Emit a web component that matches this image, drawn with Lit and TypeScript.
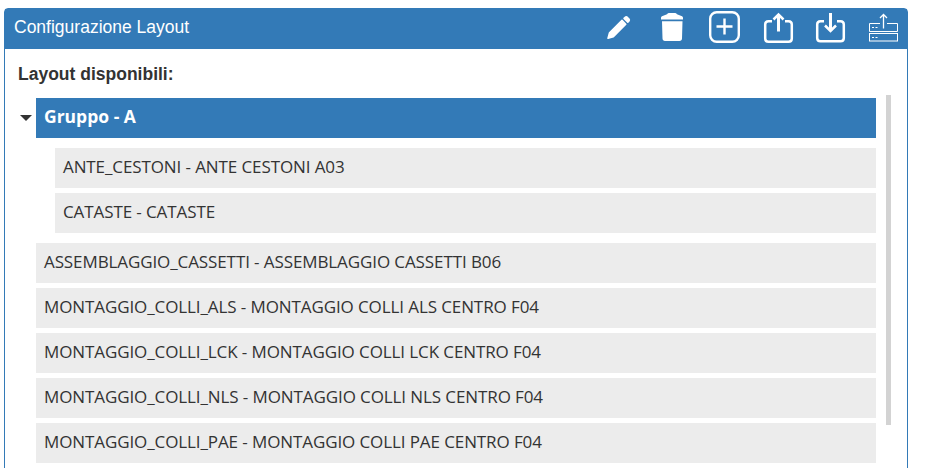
import { LitElement, html, css, svg } from 'lit';
import { customElement } from 'lit/decorators.js';

const groupItems = ['ANTE_CESTONI - ANTE CESTONI A03', 'CATASTE - CATASTE'];

const layouts = [
  'ASSEMBLAGGIO_CASSETTI - ASSEMBLAGGIO CASSETTI B06',
  'MONTAGGIO_COLLI_ALS - MONTAGGIO COLLI ALS CENTRO F04',
  'MONTAGGIO_COLLI_LCK - MONTAGGIO COLLI LCK CENTRO F04',
  'MONTAGGIO_COLLI_NLS - MONTAGGIO COLLI NLS CENTRO F04',
  'MONTAGGIO_COLLI_PAE - MONTAGGIO COLLI PAE CENTRO F04',
];

// every icon sits in a 32x34 box, the toolbar steps them 53px apart
const icons = [
  svg`<path fill="#fff" stroke="#fff" stroke-width="1.5" stroke-linejoin="round" d="M5 28.200l1.500-5.400L19 10.400l3.800 3.800L10.400 26.700zM21 8.400l1.300-1.200c.6-.5 1.300-.5 1.900 0l1.800 1.800c.5.600.5 1.300 0 1.900l-1.200 1.300z"/>`,
  svg`<path fill="#fff" d="M5 9.500V8c0-1 .6-1.600 1.600-2L11 4.200c.6-.8 1.200-1.200 2-1.200h6c.8 0 1.400.4 2 1.200L25.400 6c1 .4 1.600 1 1.600 2v1.500zM6 11.200h20.500l-.5 17.300c0 1.500-1 2.500-2.500 2.500h-14.500c-1.500 0-2.500-1-2.500-2.500z"/>`,
  svg`<g fill="none" stroke="#fff"><rect x="1.200" y="2.200" width="28.600" height="29.600" rx="6.500" stroke-width="2.400"/><path d="M15.500 8.500v16M7.500 16.500h16" stroke-width="2.400"/></g>`,
  svg`<g fill="none" stroke="#fff" stroke-width="2.500"><path d="M10 11.200H6.500c-2 0-3.300 1.300-3.300 3.300v14c0 2 1.300 3.300 3.300 3.300h20c2 0 3.300-1.300 3.300-3.300v-14c0-2-1.300-3.300-3.300-3.300H23"/><path d="M16.500 21.500V4.500" stroke-width="3"/><path d="M11.500 9.500l5-5 5 5"/></g>`,
  svg`<g fill="none" stroke="#fff" stroke-width="2.500"><path d="M9 11.200H5.500c-2 0-3.300 1.300-3.300 3.300v13.500c0 2 1.300 3.300 3.300 3.300h20c2 0 3.300-1.300 3.300-3.300V14.500c0-2-1.300-3.300-3.300-3.300H22"/><path d="M15.500 3v17.500" stroke-width="3"/><path d="M10 15.500l5.500 5.500 5.500-5.500"/></g>`,
  svg`<g fill="none" stroke="#fff"><path d="M15.500 18.500V4.500M12 8l3.500-3.500L19 8" stroke-width="1.300"/><path d="M12 13.500H1.500v8h28v-8H19"/><rect x="1.500" y="23.500" width="28" height="7.500"/><path d="M4 17.500h2M7.500 17.500h2M4 27.500h2M7.500 27.500h2" stroke-width="1.200"/></g>`,
];

@customElement('app-root')
export class AppRoot extends LitElement {
  static styles = css`
    :host {
      display: block;
      height: 468px;
      overflow: hidden;
      background: #fff;
    }

    .panel {
      margin: 8px 19px 0 4px;
      height: 480px;
      box-sizing: border-box;
      border: 1px solid #337ab7;
      border-radius: 4px;
      font-family: 'Liberation Sans', Arial, sans-serif;
    }

    .heading {
      display: flex;
      align-items: center;
      justify-content: space-between;
      box-sizing: border-box;
      height: 40px;
      padding: 0 7px 4px 9px;
      background: #337ab7;
      color: #fff;
      font-size: 17.5px;
    }

    .tools {
      display: flex;
      align-items: center;
      gap: 21px;
    }

    .tools svg {
      display: block;
      width: 32px;
      height: 34px;
    }

    .body {
      padding: 14px 0 0 13px;
    }

    .label {
      height: 35px;
      font-size: 17.5px;
      font-weight: 700;
      line-height: 22px;
      color: #333;
    }

    .scroller {
      position: relative;
      padding-left: 18px;
      width: 840px;
    }

    .bar {
      position: absolute;
      top: -3px;
      left: 868px;
      width: 5px;
      height: 330px;
      background: #d3d3d3;
    }

    .caret {
      position: absolute;
      left: 2px;
      top: 17px;
      border-style: solid;
      border-width: 6px 6.500px 0;
      border-color: #333 transparent transparent;
    }

    .row {
      display: flex;
      align-items: center;
      box-sizing: border-box;
      height: 40px;
      padding: 0 0 4px 8px;
      margin-bottom: 5px;
      background: #ececec;
      color: #333;
      font-family: 'Open Sans', sans-serif;
      font-size: 17px;
      letter-spacing: -0.1px;
      white-space: nowrap;
    }

    .group {
      margin-bottom: 10px;
      background: #337ab7;
      color: #fff;
      font-size: 17.5px;
      font-weight: 700;
      letter-spacing: 0;
    }

    .children {
      margin: 0 0 10px 19px;
    }

    .children .row:last-child {
      margin-bottom: 0;
    }
  `;

  render() {
    return html`
      <div class="panel">
        <div class="heading">
          <span>Configurazione Layout</span>
          <div class="tools">
            ${icons.map((icon) => html`<svg viewBox="0 0 32 34">${icon}</svg>`)}
          </div>
        </div>
        <div class="body">
          <div class="label">Layout disponibili:</div>
          <div class="scroller">
            <div class="bar"></div>
            <div class="caret"></div>
            <div class="row group">Gruppo - A</div>
            <div class="children">
              ${groupItems.map((item) => html`<div class="row">${item}</div>`)}
            </div>
            ${layouts.map((item) => html`<div class="row">${item}</div>`)}
          </div>
        </div>
      </div>
    `;
  }
}
